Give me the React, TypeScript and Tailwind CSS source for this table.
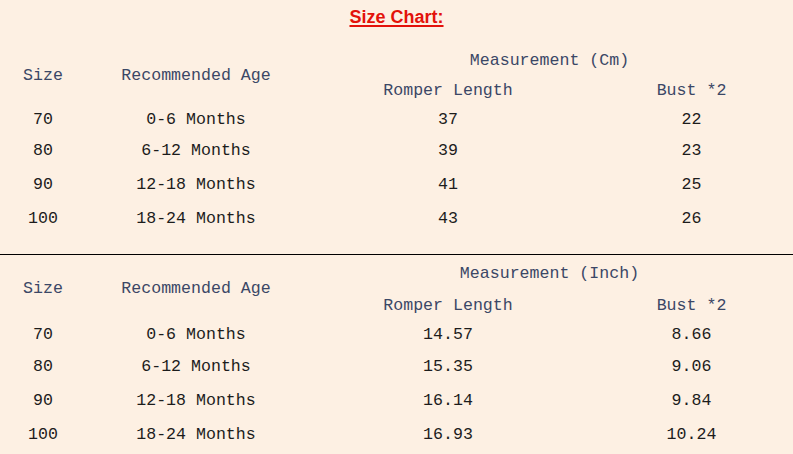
import React from "react";

type Row = { size: string; age: string; length: string; bust: string; h: string };

const cmRows: Row[] = [
  { size: "70", age: "0-6 Months", length: "37", bust: "22", h: "h-[28px]" },
  { size: "80", age: "6-12 Months", length: "39", bust: "23", h: "h-[34px]" },
  { size: "90", age: "12-18 Months", length: "41", bust: "25", h: "h-[34px]" },
  { size: "100", age: "18-24 Months", length: "43", bust: "26", h: "h-[34px]" },
];

const inchRows: Row[] = [
  { size: "70", age: "0-6 Months", length: "14.57", bust: "8.66", h: "h-[32px]" },
  { size: "80", age: "6-12 Months", length: "15.35", bust: "9.06", h: "h-[32px]" },
  { size: "90", age: "12-18 Months", length: "16.14", bust: "9.84", h: "h-[36px]" },
  { size: "100", age: "18-24 Months", length: "16.93", bust: "10.24", h: "h-[32px]" },
];

const cx = (...c: string[]) => c.join(" ");

const SizeTable = ({
  unit,
  rows,
  topH,
  subH,
  sidePad,
}: {
  unit: string;
  rows: Row[];
  topH: string;
  subH: string;
  sidePad: string;
}) => {
  const head = "flex items-center justify-center text-[#3b4766]";
  return (
    <div className="grid grid-cols-[86px_220px_284px_203px] text-center">
      {/* header */}
      <div className={cx("row-span-2", head, sidePad)}>Size</div>
      <div className={cx("row-span-2", head, sidePad)}>Recommended Age</div>
      <div className={cx("col-span-2", head, topH)}>Measurement ({unit})</div>
      <div className={cx(head, subH)}>Romper Length</div>
      <div className={cx(head, subH)}>Bust *2</div>

      {rows.map((r) => (
        <React.Fragment key={r.size}>
          <div className={cx("flex items-center justify-center", r.h)}>{r.size}</div>
          <div className={cx("flex items-center justify-center", r.h)}>{r.age}</div>
          <div className={cx("flex items-center justify-center", r.h)}>{r.length}</div>
          <div className={cx("flex items-center justify-center", r.h)}>{r.bust}</div>
        </React.Fragment>
      ))}
    </div>
  );
};

export default function App() {
  return (
    <div className="w-[793px] h-[454px] bg-[#fdf0e3] text-[#1c1c1c] font-['Liberation_Mono',monospace] text-[16.6px] overflow-hidden">
      <div className="h-[34px] flex items-center justify-center">
        <span className="font-['Liberation_Sans',Arial,sans-serif] font-bold text-[18px] text-[#e3120b] underline underline-offset-2 decoration-2">
          Size Chart:
        </span>
      </div>
      <div className="h-[12px]" />
      <SizeTable unit="Cm" rows={cmRows} topH="h-[30px]" subH="h-[30px]" sidePad="" />
      <div className="h-[18px]" />
      <div className="h-px bg-black" />
      <SizeTable unit="Inch" rows={inchRows} topH="h-[38px]" subH="h-[26px]" sidePad="pt-[4px]" />
    </div>
  );
}
